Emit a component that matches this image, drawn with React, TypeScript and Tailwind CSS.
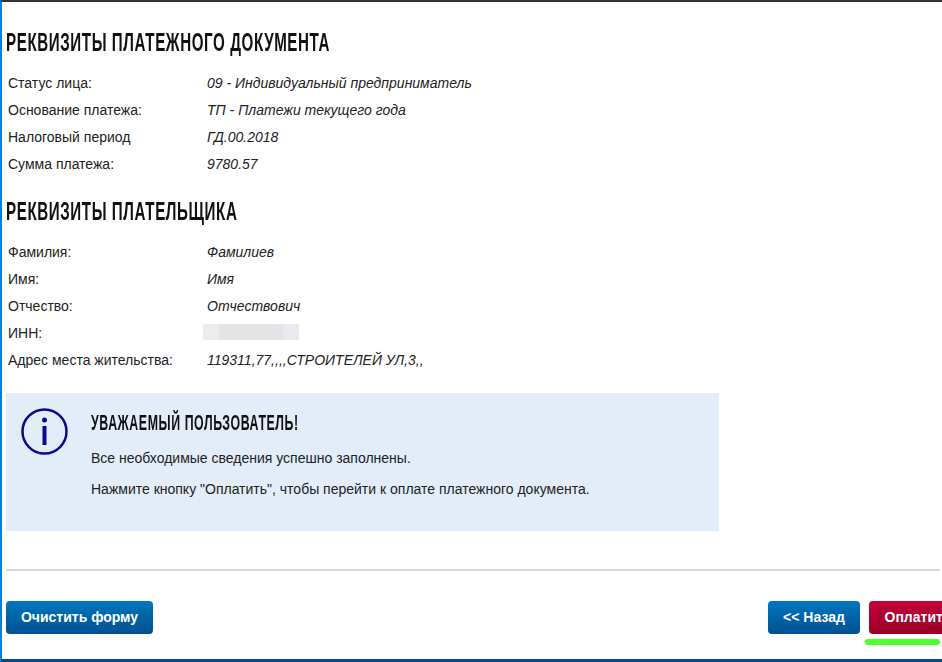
const heading = "origin-left whitespace-nowrap font-['Liberation_Sans',Arial,sans-serif] font-bold tracking-[1px] text-[#111] uppercase leading-none";

function Row({ label, value, blur }: { label: string; value?: string; blur?: boolean }) {
  return (
    <div className="flex h-[27px] items-center pl-[2px]">
      <div className="w-[199px] shrink-0">{label}</div>
      {blur ? (
        <div className="mt-[-4px] ml-[-4px] flex h-4 w-[96px]">
          <div className="h-full w-4 bg-[#ececee]" />
          <div className="h-full w-[64px] bg-[#e4e4e6]" />
          <div className="h-full w-4 bg-[#eaeaee]" />
        </div>
      ) : (
        <div className="italic">{value}</div>
      )}
    </div>
  );
}

function Btn({ children, red, className }: { children: React.ReactNode; red?: boolean; className?: string }) {
  return (
    <button
      className={`h-[33px] shrink-0 rounded-[4px] text-[14px] font-bold text-white ${
        red ? "bg-gradient-to-b from-[#c4003c] to-[#980024]" : "bg-gradient-to-b from-[#0077c0] to-[#00508f]"
      } ${className ?? ""}`}
    >
      {children}
    </button>
  );
}

export default function App() {
  return (
    <div className="relative h-[662px] w-[942px] overflow-hidden border-t-2 border-b-[3px] border-l-2 border-t-[#333] border-b-[#004a8c] border-l-[#0a7fd8] bg-white font-['Liberation_Sans',Arial,sans-serif] text-[14px] text-[#222]">
      <div className="flex h-full w-[980px] flex-col px-[4px]">
        <h2 className={`${heading} mt-[28px] scale-x-[0.605] text-[25px]`}>Реквизиты платежного документа</h2>
        <div className="mt-[15px]">
          <Row label="Статус лица:" value="09 - Индивидуальный предприниматель" />
          <Row label="Основание платежа:" value="ТП - Платежи текущего года" />
          <Row label="Налоговый период" value="ГД.00.2018" />
          <Row label="Сумма платежа:" value="9780.57" />
        </div>
        <h2 className={`${heading} mt-[21px] scale-x-[0.605] text-[25px]`}>Реквизиты плательщика</h2>
        <div className="mt-[15px]">
          <Row label="Фамилия:" value="Фамилиев" />
          <Row label="Имя:" value="Имя" />
          <Row label="Отчество:" value="Отчествович" />
          <Row label="ИНН:" blur />
          <Row label="Адрес места жительства:" value="119311,77,,,,СТРОИТЕЛЕЙ УЛ,3,," />
        </div>
        <div className="mt-[19px] flex h-[138px] w-[713px] bg-[#e3edf9] pt-[15px] pl-[15px]">
          <svg width="48" height="48" viewBox="0 0 48 48" className="shrink-0" fill="none">
            <circle cx="23.5" cy="23.5" r="22" stroke="#0a0a8c" strokeWidth="2.5" />
            <circle cx="23.5" cy="12" r="2.5" fill="#0a0a8c" />
            <rect x="21.5" y="18" width="4" height="19" fill="#0a0a8c" />
          </svg>
          <div className="ml-[22px]">
            <h3 className={`${heading} mt-[4px] scale-x-[0.562] text-[22px]`}>Уважаемый пользователь!</h3>
            <p className="mt-[14px]">Все необходимые сведения успешно заполнены.</p>
            <p className="mt-[10px]">Нажмите кнопку "Оплатить", чтобы перейти к оплате платежного документа.</p>
          </div>
        </div>
        <div className="mt-[38px] h-[2px] w-[934px] bg-[#d3d9de]" />
        <div className="mt-[30px] flex w-[980px]">
          <Btn className="w-[147px]">Очистить форму</Btn>
          <Btn className="ml-[615px] w-[92px]">&lt;&lt; Назад</Btn>
          <Btn red className="ml-[9px] w-[98px]">Оплатить</Btn>
        </div>
      </div>
      <div className="absolute top-[637px] left-[863px] h-[6px] w-[75px] rounded-full bg-[#4cff2e] blur-[0.5px]" />
    </div>
  );
}
